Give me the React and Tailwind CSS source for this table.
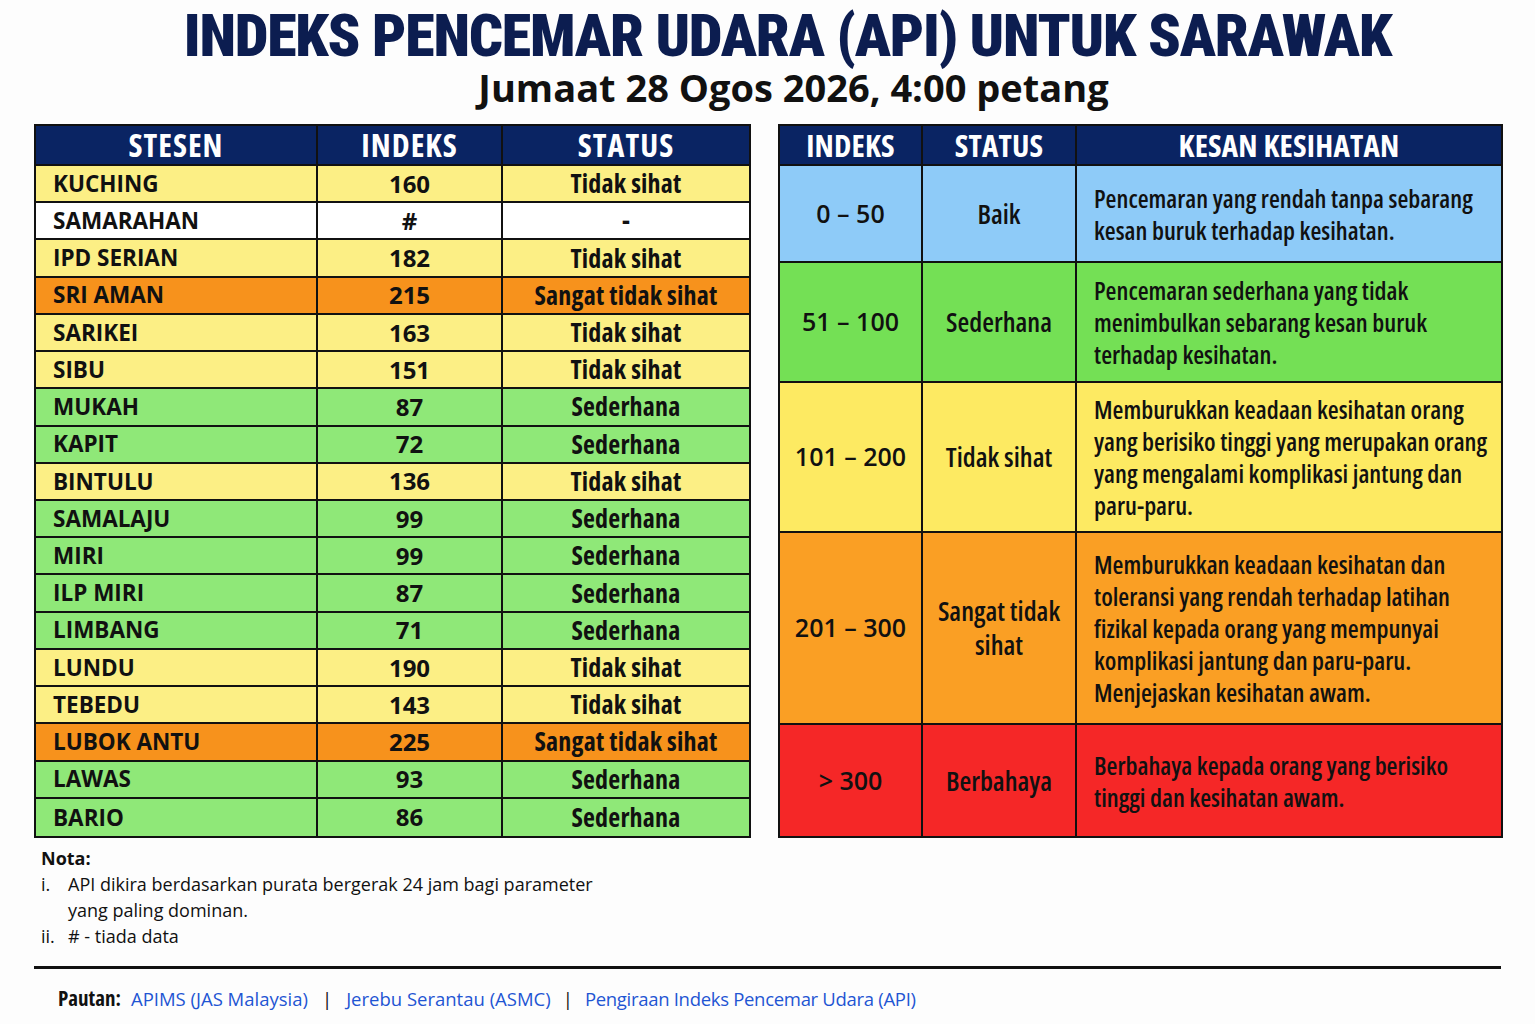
const YELLOW = "bg-[#fcef85]";
const ORANGE = "bg-[#f7921c]";
const GREEN = "bg-[#8fe878]";
const WHITE = "bg-white";

const stations = [
  ["KUCHING", "160", "Tidak sihat", YELLOW],
  ["SAMARAHAN", "#", "-", WHITE],
  ["IPD SERIAN", "182", "Tidak sihat", YELLOW],
  ["SRI AMAN", "215", "Sangat tidak sihat", ORANGE],
  ["SARIKEI", "163", "Tidak sihat", YELLOW],
  ["SIBU", "151", "Tidak sihat", YELLOW],
  ["MUKAH", "87", "Sederhana", GREEN],
  ["KAPIT", "72", "Sederhana", GREEN],
  ["BINTULU", "136", "Tidak sihat", YELLOW],
  ["SAMALAJU", "99", "Sederhana", GREEN],
  ["MIRI", "99", "Sederhana", GREEN],
  ["ILP MIRI", "87", "Sederhana", GREEN],
  ["LIMBANG", "71", "Sederhana", GREEN],
  ["LUNDU", "190", "Tidak sihat", YELLOW],
  ["TEBEDU", "143", "Tidak sihat", YELLOW],
  ["LUBOK ANTU", "225", "Sangat tidak sihat", ORANGE],
  ["LAWAS", "93", "Sederhana", GREEN],
  ["BARIO", "86", "Sederhana", GREEN],
];

const levels = [
  {
    range: "0 – 50",
    status: ["Baik"],
    desc: ["Pencemaran yang rendah tanpa sebarang", "kesan buruk terhadap kesihatan."],
    bg: "bg-[#8ecbf8]",
  },
  {
    range: "51 – 100",
    status: ["Sederhana"],
    desc: ["Pencemaran sederhana yang tidak", "menimbulkan sebarang kesan buruk", "terhadap kesihatan."],
    bg: "bg-[#74e055]",
  },
  {
    range: "101 – 200",
    status: ["Tidak sihat"],
    desc: [
      "Memburukkan keadaan kesihatan orang",
      "yang berisiko tinggi yang merupakan orang",
      "yang mengalami komplikasi jantung dan",
      "paru-paru.",
    ],
    bg: "bg-[#fdea62]",
  },
  {
    range: "201 – 300",
    status: ["Sangat tidak", "sihat"],
    desc: [
      "Memburukkan keadaan kesihatan dan",
      "toleransi yang rendah terhadap latihan",
      "fizikal kepada orang yang mempunyai",
      "komplikasi jantung dan paru-paru.",
      "Menjejaskan kesihatan awam.",
    ],
    bg: "bg-[#fa9f24]",
  },
  {
    range: "> 300",
    status: ["Berbahaya"],
    desc: ["Berbahaya kepada orang yang berisiko", "tinggi dan kesihatan awam."],
    bg: "bg-[#f52727]",
  },
];

function HeadCell({ children, last, wide }) {
  return (
    <div
      className={
        "flex items-center justify-center bg-[#0a2463] text-white font-bold font-stretch-condensed border-b-2 border-[#111] " +
        (wide ? "text-[32px] tracking-[1px] " : "text-[31px] tracking-[0.2px] ") +
        (last ? "" : "border-r-2")
      }
    >
      {children}
    </div>
  );
}

export default function App() {
  return (
    <div className="w-[1535px] h-[1024px] bg-[#fdfdfd] font-['Open_Sans',sans-serif] text-[#111] overflow-hidden">
      <header className="flex flex-col items-center pt-[8px] pl-[40px]">
        <h1 className="h-[56px] leading-[56px] text-[60px] font-black font-['Roboto',sans-serif] font-stretch-condensed text-[#0c1d50] tracking-[-1.2px]">
          INDEKS PENCEMAR UDARA (API) UNTUK SARAWAK
        </h1>
        <div className="pl-[12px] h-[46px] leading-[46px] text-[38px] font-bold text-[#111]">
          Jumaat 28 Ogos 2026, 4:00 petang
        </div>
      </header>

      <div className="flex gap-[27px] pl-[34px] mt-[14px]">
        {/* Left table */}
        <div className="grid grid-cols-[282px_185px_246px] grid-rows-[40px_repeat(18,minmax(0,1fr))] h-[714px] border-2 border-[#111]">
          <HeadCell wide>STESEN</HeadCell>
          <HeadCell wide>INDEKS</HeadCell>
          <HeadCell wide last>STATUS</HeadCell>
          {stations.map(([name, idx, status, bg], i) => {
            const last = i === stations.length - 1;
            const bb = last ? "" : " border-b-2";
            return [
              <div
                key={name + "a"}
                className={`${bg} flex items-center pl-[17px] text-[22.5px] font-bold border-r-2 border-[#111]${bb}`}
              >
                {name}
              </div>,
              <div
                key={name + "b"}
                className={`${bg} flex items-center justify-center text-[24px] font-bold border-r-2 border-[#111]${bb}`}
              >
                {idx}
              </div>,
              <div
                key={name + "c"}
                className={`${bg} flex items-center justify-center text-[26px] font-bold font-stretch-condensed tracking-[0.2px] border-[#111]${bb}`}
              >
                {status}
              </div>,
            ];
          })}
        </div>

        {/* Right table */}
        <div className="grid grid-cols-[143px_154px_424px] grid-rows-[40px_97px_120px_150px_192px_111px] h-[714px] border-2 border-[#111]">
          <HeadCell>INDEKS</HeadCell>
          <HeadCell>STATUS</HeadCell>
          <HeadCell last>KESAN KESIHATAN</HeadCell>
          {levels.map((l, i) => {
            const last = i === levels.length - 1;
            const bb = last ? "" : " border-b-2";
            return [
              <div
                key={l.range + "a"}
                className={`${l.bg} flex items-center justify-center text-[25px] font-semibold border-r-2 border-[#111]${bb}`}
              >
                {l.range}
              </div>,
              <div
                key={l.range + "b"}
                className={`${l.bg} flex flex-col items-center justify-center text-[27px] leading-[34px] font-semibold font-stretch-condensed border-r-2 border-[#111]${bb}`}
              >
                {l.status.map((s) => (
                  <span key={s}>{s}</span>
                ))}
              </div>,
              <div
                key={l.range + "c"}
                className={`${l.bg} flex flex-col justify-center pl-[17px] text-[25px] leading-[32px] font-semibold font-stretch-condensed whitespace-nowrap overflow-hidden border-[#111]${bb}`}
              >
                {l.desc.map((s) => (
                  <span key={s}>{s}</span>
                ))}
              </div>,
            ];
          })}
        </div>
      </div>

      <div className="pl-[41px] mt-[7px] text-[18px] leading-[26px] text-[#111]">
        <div className="font-bold">Nota:</div>
        <div className="flex font-medium">
          <span className="w-[27px]">i.</span>
          <span>
            API dikira berdasarkan purata bergerak 24 jam bagi parameter
            <br />
            yang paling dominan.
          </span>
        </div>
        <div className="flex font-medium">
          <span className="w-[27px]">ii.</span>
          <span># - tiada data</span>
        </div>
      </div>

      <div className="mx-[34px] mt-[17px] h-[3px] bg-[#111]" />

      <div className="flex items-center pl-[58px] mt-[14px] text-[18.5px] font-medium">
        <span className="font-bold text-[21px] font-stretch-condensed text-[#111] mr-[10px]">Pautan:</span>
        <span className="text-[#1f55d3]">APIMS (JAS Malaysia)</span>
        <span className="mx-[14px] text-[#111]">|</span>
        <span className="text-[#1f55d3]">Jerebu Serantau (ASMC)</span>
        <span className="mx-[12px] text-[#111]">|</span>
        <span className="text-[#1f55d3] tracking-[-0.3px]">Pengiraan Indeks Pencemar Udara (API)</span>
      </div>
    </div>
  );
}
